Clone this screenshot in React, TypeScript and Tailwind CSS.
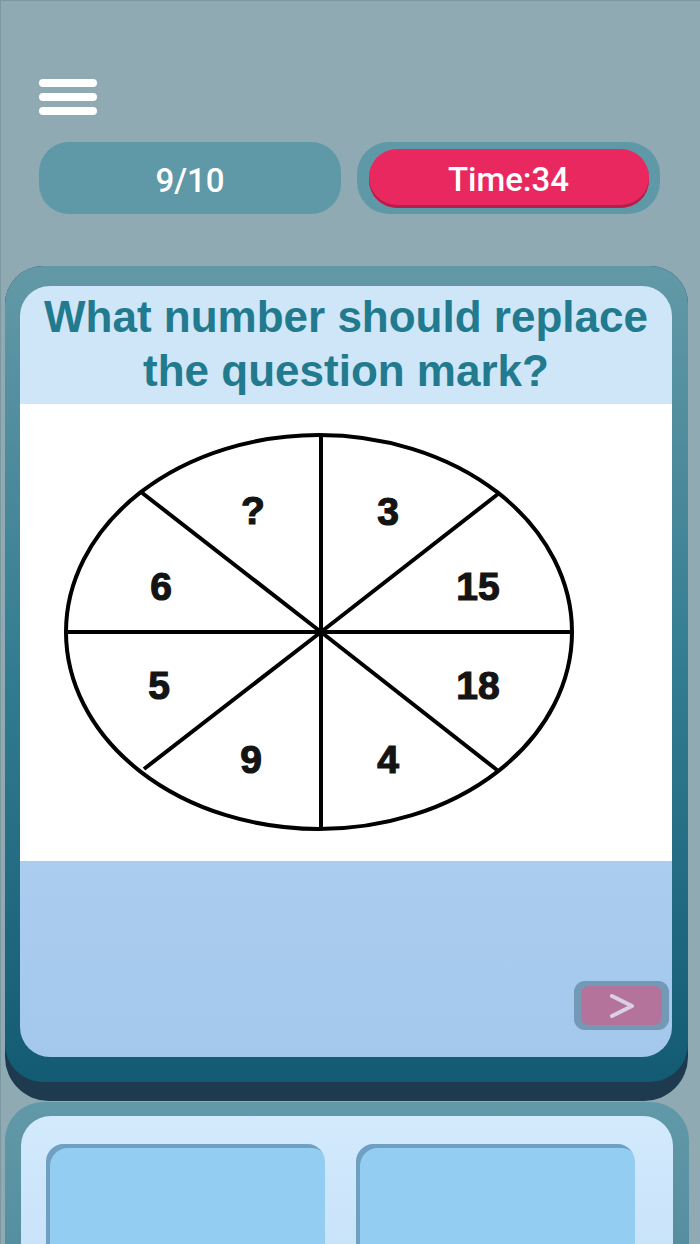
import React from "react";

const numbers = [
  { t: "?", x: 233, y: 106 },
  { t: "3", x: 368, y: 107 },
  { t: "6", x: 141, y: 182 },
  { t: "15", x: 458, y: 182 },
  { t: "5", x: 139, y: 281 },
  { t: "18", x: 458, y: 281 },
  { t: "9", x: 231, y: 355 },
  { t: "4", x: 368, y: 355 },
];

// the puzzle picture: an ellipse cut into eight slices
const WheelPuzzle = () => (
  <svg width="652" height="457" viewBox="0 0 652 457" className="block">
    <rect width="652" height="457" fill="#ffffff" />
    <g stroke="#000" strokeWidth="4" fill="none">
      <ellipse cx="299" cy="228" rx="253" ry="197" />
      <line x1="301" y1="31" x2="301" y2="425" />
      <line x1="46" y1="228" x2="552" y2="228" />
      <line x1="301" y1="228" x2="121" y2="88" />
      <line x1="301" y1="228" x2="478" y2="90" />
      <line x1="301" y1="228" x2="124" y2="365" />
      <line x1="301" y1="228" x2="477" y2="366" />
    </g>
    {numbers.map((n) => (
      <text
        key={n.t}
        x={n.x}
        y={n.y}
        textAnchor="middle"
        dominantBaseline="central"
        fontFamily="'Liberation Sans', Arial, sans-serif"
        fontWeight="700"
        fontSize="39"
        fill="#141414"
        stroke="#141414"
        strokeWidth="1.2"
      >
        {n.t}
      </text>
    ))}
  </svg>
);

const App = () => {
  return (
    <div className="relative w-[700px] h-[1244px] overflow-hidden bg-[#8faab2] border-l border-t border-[#7b979f] font-['Liberation_Sans',Arial,sans-serif]">
      {/* menu */}
      <div className="pt-[78px] pl-[38px] flex flex-col gap-[6px]">
        <div className="h-[8px] w-[58px] rounded-full bg-white" />
        <div className="h-[8px] w-[58px] rounded-full bg-white" />
        <div className="h-[8px] w-[58px] rounded-full bg-white" />
      </div>

      {/* score + timer */}
      <div className="mt-[27px] ml-[38px] flex gap-[16px] font-['Roboto',sans-serif] font-medium text-[33px] text-white">
        <div className="h-[72px] w-[302px] rounded-[30px] bg-[#5f99a8] flex items-center justify-center pt-[5px]">
          9/10
        </div>
        <div className="h-[72px] w-[303px] rounded-[32px] bg-[#5f99a8] flex items-center justify-center">
          <div className="h-[59px] w-[280px] rounded-[28px] bg-[#e8285f] shadow-[inset_0_-3px_0_#b51f4b] flex items-center justify-center pt-[4px]">
            Time:34
          </div>
        </div>
      </div>

      {/* question card */}
      <div className="mt-[52px] ml-[4px] w-[683px] rounded-t-[38px] rounded-b-[44px] bg-[#1d3a4e] pb-[19px]">
        <div className="rounded-[38px] bg-gradient-to-b from-[#6399a7] via-[#327c91] to-[#135b73] pl-[15px] pr-[16px] pt-[20px] pb-[25px]">
          <div className="rounded-[30px] overflow-hidden">
            <div className="h-[118px] bg-[#cfe6f8] pt-[4px] text-center text-[44px] leading-[54px] font-bold text-[#217a8d]">
              What number should replace
              <br />
              the question mark?
            </div>
            <WheelPuzzle />
            <div className="h-[196px] bg-gradient-to-b from-[#abcdef] to-[#a3c8ec] flex items-end justify-end pr-[3px] pb-[27px]">
              <button className="h-[49px] w-[95px] rounded-[11px] bg-[#7399b6] flex items-center justify-center">
                <span className="h-[39px] w-[81px] rounded-[8px] bg-[#b4739a] flex items-center justify-center">
                  <svg width="30" height="26" viewBox="0 0 30 26">
                    <polyline
                      points="5,3 25,13 5,23"
                      fill="none"
                      stroke="#dccfe2"
                      strokeWidth="4"
                      strokeLinecap="round"
                      strokeLinejoin="round"
                    />
                  </svg>
                </span>
              </button>
            </div>
          </div>
        </div>
      </div>

      {/* answers card */}
      <div className="mt-[1px] ml-[4px] w-[684px] h-[200px] rounded-t-[38px] bg-gradient-to-b from-[#6299a8] to-[#4f8a9c] pt-[14px] pl-[16px] pr-[16px]">
        <div className="h-[200px] rounded-t-[30px] bg-gradient-to-b from-[#d3eafd] to-[#c4dff7] pt-[28px] pl-[25px] flex gap-[31px]">
          <div className="h-[160px] w-[279px] rounded-[18px] bg-[#93cdf2] shadow-[inset_4px_4px_0_#6f9fc1]" />
          <div className="h-[160px] w-[279px] rounded-[18px] bg-[#93cdf2] shadow-[inset_4px_4px_0_#6f9fc1]" />
        </div>
      </div>
    </div>
  );
};

export default App;
